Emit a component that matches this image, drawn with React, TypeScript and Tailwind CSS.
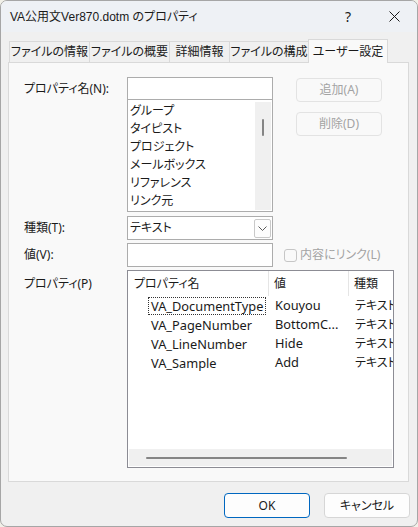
import React from 'react';

const FONT = "font-['Noto_Sans','Noto_Sans_CJK_JP',sans-serif] [font-feature-settings:'palt']";

const tabs = [
  { label: 'ファイルの情報', w: 'w-[81px]' },
  { label: 'ファイルの概要', w: 'w-[81px]' },
  { label: '詳細情報', w: 'w-[61px]' },
  { label: 'ファイルの構成', w: 'w-[80px]' },
];

const listItems = ['グループ', 'タイピスト', 'プロジェクト', 'メールボックス', 'リファレンス', 'リンク元'];

const props = [
  { name: 'VA_DocumentType', value: 'Kouyou', type: 'テキスト' },
  { name: 'VA_PageNumber', value: 'BottomC...', type: 'テキスト' },
  { name: 'VA_LineNumber', value: 'Hide', type: 'テキスト' },
  { name: 'VA_Sample', value: 'Add', type: 'テキスト' },
];

const DisabledButton: React.FC<{ label: string; className?: string }> = ({ label, className }) => (
  <button
    type="button"
    disabled
    className={`w-[86px] h-[24px] rounded-[4px] border border-[#e3e3e3] bg-[#f9f9f9] text-[12px] text-[#a3a3a3] flex items-center justify-center ${className ?? ''}`}
  >
    {label}
  </button>
);

export default function App() {
  return (
    <div className={`w-[418px] h-[527px] bg-[#f1f0e8] text-[12px] text-[#1a1a1a] ${FONT}`}>
      <div className="w-[418px] h-[527px] border border-[#a6a6a6] rounded-[7px] bg-[#f0f0f0] overflow-hidden flex flex-col">
        {/* title bar */}
        <div className="h-[31px] bg-[#eef1f5] flex items-center shrink-0">
          <span className="pl-[9px] flex-1 text-[12px] text-[#1a1a1a] font-['Liberation_Sans','Noto_Sans_CJK_JP',sans-serif]">
            VA公用文Ver870.dotm のプロパティ
          </span>
          <div className="w-[46px] h-full flex items-center justify-center text-[14px]">?</div>
          <div className="w-[46px] h-full flex items-center justify-center">
            <svg width="11" height="11" viewBox="0 0 11 11" stroke="#1a1a1a" strokeWidth="1">
              <path d="M0.5 0.5L10.5 10.5M10.5 0.5L0.5 10.5" />
            </svg>
          </div>
        </div>

        <div className="px-[7px] pt-[7px] flex flex-col">
          {/* tabs */}
          <div className="flex items-end h-[23px] pl-[1px]">
            {tabs.map((t, i) => (
              <div
                key={t.label}
                className={`${t.w} h-[21px] ${i > 0 ? '-ml-px' : ''} border border-b-0 border-[#d9d9d9] bg-[#f0f0f0] flex items-center justify-center text-[12px]`}
              >
                {t.label}
              </div>
            ))}
            <div className="w-[80px] h-[24px] -ml-px mb-[-1px] relative z-10 border border-b-0 border-[#d9d9d9] bg-[#f9f9f9] flex items-center justify-center text-[12px]">
              ユーザー設定
            </div>
          </div>

          {/* panel */}
          <div className="w-[401px] h-[420px] border border-[#d9d9d9] bg-[#f9f9f9] pl-[15px] pt-[14px] flex flex-col">
            <div className="flex">
              <div className="w-[103px] h-[23px] flex items-center">プロパティ名(N):</div>
              <div className="w-[146px] flex flex-col">
                <div className="h-[23px] border border-[#acacac] bg-white" />
                <div className="h-[112px] border border-t-0 border-[#acacac] bg-white flex">
                  <div className="flex-1 pl-[2px] pt-[2px] flex flex-col">
                    {listItems.map((item) => (
                      <div key={item} className="h-[18px] leading-[18px] whitespace-nowrap">
                        {item}
                      </div>
                    ))}
                  </div>
                  <div className="w-[16px] mr-[1px] mt-[2px] mb-[1px] bg-[#f0f0f0] flex justify-center">
                    <div className="w-[2px] h-[17px] mt-[17px] bg-[#858585] rounded-full" />
                  </div>
                </div>
              </div>
              <div className="ml-[23px] flex flex-col">
                <DisabledButton label="追加(A)" className="mt-[1px]" />
                <DisabledButton label="削除(D)" className="mt-[10px]" />
              </div>
            </div>

            {/* type */}
            <div className="flex mt-[4px]">
              <div className="w-[103px] h-[24px] flex items-center">種類(T):</div>
              <div className="w-[146px] h-[24px] border border-[#acacac] bg-white flex items-center pl-[2px] pr-[1px]">
                <span className="flex-1">テキスト</span>
                <div className="w-[17px] h-[19px] border border-[#c9c9c9] rounded-[2px] bg-[#fdfdfd] flex items-center justify-center">
                  <svg width="9" height="5" viewBox="0 0 9 5" fill="none" stroke="#5a5a5a" strokeWidth="1">
                    <path d="M0.5 0.5L4.5 4.5L8.5 0.5" />
                  </svg>
                </div>
              </div>
            </div>

            {/* value */}
            <div className="flex mt-[3px] items-center">
              <div className="w-[103px] h-[24px] flex items-center">値(V):</div>
              <div className="w-[146px] h-[24px] border border-[#acacac] bg-white" />
              <div className="ml-[11px] w-[13px] h-[13px] rounded-[3px] border border-[#c6c6c6] bg-[#f9f9f9]" />
              <span className="ml-[3px] text-[#a3a3a3]">内容にリンク(L)</span>
            </div>

            {/* properties table */}
            <div className="flex mt-[3px]">
              <div className="w-[103px] pt-[5px] leading-[18px]">プロパティ(P)</div>
              <div className="w-[267px] h-[198px] border border-[#8c8c94] bg-white flex flex-col overflow-hidden">
                <div className="flex h-[25px] shrink-0">
                  <div className="w-[141px] pl-[6px] pt-[4px] border-r border-[#e5e5e5] h-[25px]">プロパティ名</div>
                  <div className="w-[80px] pl-[5px] pt-[4px] border-r border-[#e5e5e5] h-[25px]">値</div>
                  <div className="flex-1 pl-[5px] pt-[4px] whitespace-nowrap">種類</div>
                </div>
                <div className="flex-1 flex flex-col">
                  {props.map((p, i) => (
                    <div key={p.name} className="flex h-[19px] items-center whitespace-nowrap">
                      <div className="w-[141px] pl-[20px] flex">
                        <span
                          className={`px-[2px] h-[18px] leading-[17px] text-[12.8px] border ${
                            i === 0 ? 'border-dotted border-[#333]' : 'border-transparent'
                          }`}
                        >
                          {p.name}
                        </span>
                      </div>
                      <div className="w-[80px] pl-[6px] text-[12.8px]">{p.value}</div>
                      <div className="flex-1 pl-[6px] overflow-hidden">{p.type}</div>
                    </div>
                  ))}
                </div>
                <div className="h-[17px] mx-[1px] mb-[1px] bg-[#f0f0f0] flex items-center shrink-0">
                  <div className="ml-[17px] w-[201px] h-[2px] bg-[#858585] rounded-full" />
                </div>
              </div>
            </div>
          </div>

          {/* footer */}
          <div className="flex justify-end gap-[14px] mt-[11px]">
            <button
              type="button"
              className="w-[86px] h-[25px] rounded-[4px] border border-[#0067c0] bg-[#fdfdfd] text-[12px] flex items-center justify-center"
            >
              OK
            </button>
            <button
              type="button"
              className="w-[86px] h-[25px] rounded-[4px] border border-[#d6d6d6] bg-[#fdfdfd] text-[12px] flex items-center justify-center"
            >
              キャンセル
            </button>
          </div>
        </div>
      </div>
    </div>
  );
}
